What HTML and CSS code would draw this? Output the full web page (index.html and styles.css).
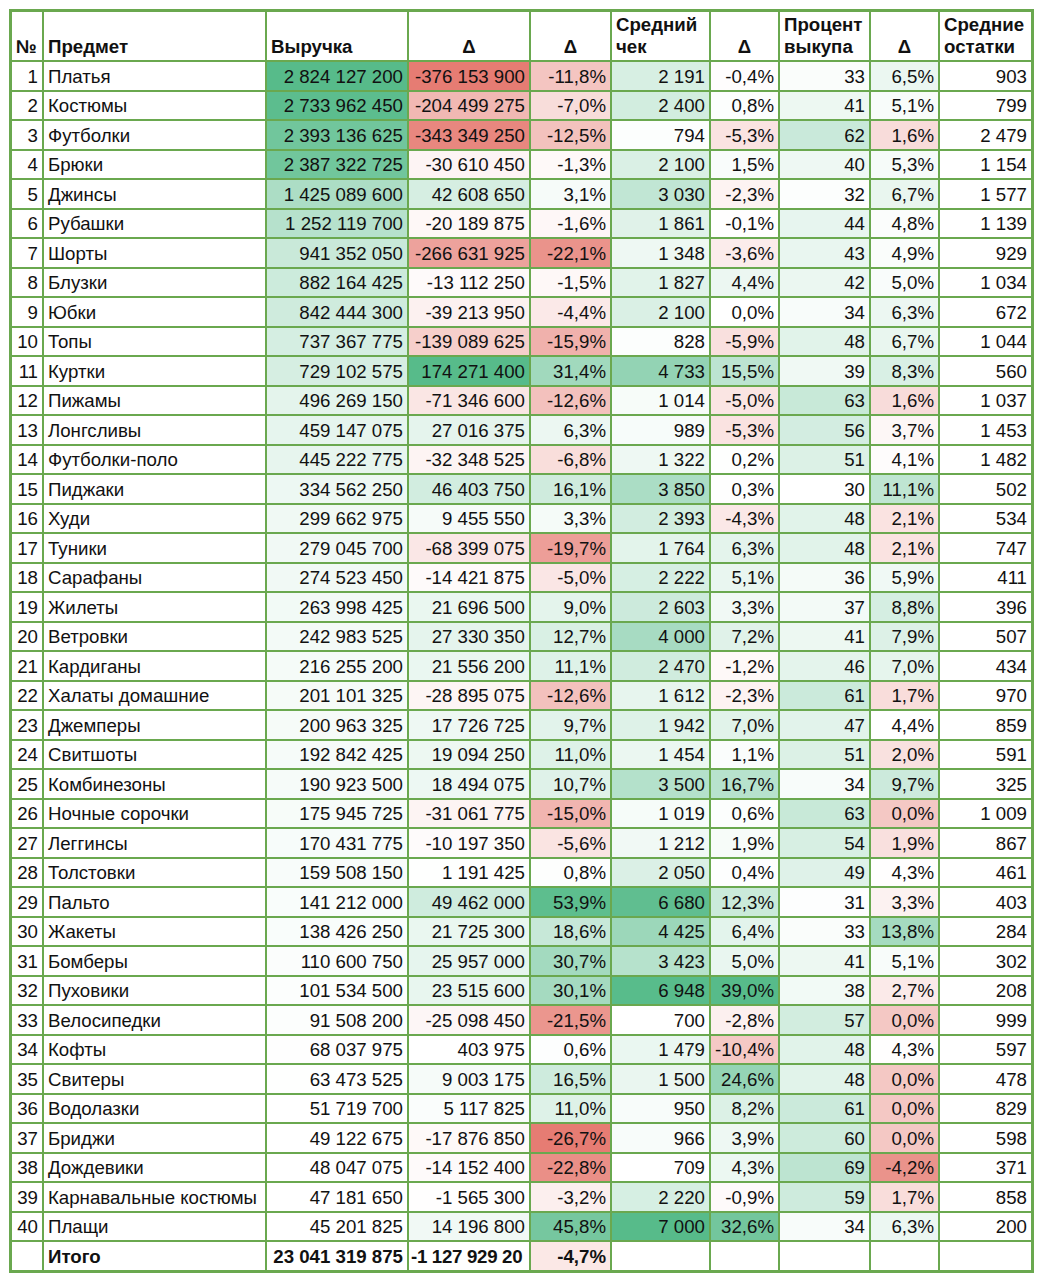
FILE: index.html
```html
<!DOCTYPE html>
<html lang="ru">
<head>
<meta charset="utf-8">
<title>Предметы</title>
<link rel="stylesheet" href="styles.css">
</head>
<body>
<table class="sheet">
<colgroup>
<col class="w-num"><col class="w-name"><col class="w-rev"><col class="w-d1"><col class="w-d2"><col class="w-chk"><col class="w-d3"><col class="w-pct"><col class="w-d4"><col class="w-rest">
</colgroup>
<thead>
<tr>
<th class="l">№</th><th class="l">Предмет</th><th class="l">Выручка</th><th class="c">Δ</th><th class="c">Δ</th><th class="l">Средний<br>чек</th><th class="c">Δ</th><th class="l">Процент<br>выкупа</th><th class="c">Δ</th><th class="l">Средние<br>остатки</th>
</tr>
</thead>
<tbody id="body">
<tr><td>1</td><td>Платья</td><td>2 824 127 200</td><td>-376 153 900</td><td>-11,8%</td><td>2 191</td><td>-0,4%</td><td>33</td><td>6,5%</td><td>903</td></tr>
<tr><td>2</td><td>Костюмы</td><td>2 733 962 450</td><td>-204 499 275</td><td>-7,0%</td><td>2 400</td><td>0,8%</td><td>41</td><td>5,1%</td><td>799</td></tr>
<tr><td>3</td><td>Футболки</td><td>2 393 136 625</td><td>-343 349 250</td><td>-12,5%</td><td>794</td><td>-5,3%</td><td>62</td><td>1,6%</td><td>2 479</td></tr>
<tr><td>4</td><td>Брюки</td><td>2 387 322 725</td><td>-30 610 450</td><td>-1,3%</td><td>2 100</td><td>1,5%</td><td>40</td><td>5,3%</td><td>1 154</td></tr>
<tr><td>5</td><td>Джинсы</td><td>1 425 089 600</td><td>42 608 650</td><td>3,1%</td><td>3 030</td><td>-2,3%</td><td>32</td><td>6,7%</td><td>1 577</td></tr>
<tr><td>6</td><td>Рубашки</td><td>1 252 119 700</td><td>-20 189 875</td><td>-1,6%</td><td>1 861</td><td>-0,1%</td><td>44</td><td>4,8%</td><td>1 139</td></tr>
<tr><td>7</td><td>Шорты</td><td>941 352 050</td><td>-266 631 925</td><td>-22,1%</td><td>1 348</td><td>-3,6%</td><td>43</td><td>4,9%</td><td>929</td></tr>
<tr><td>8</td><td>Блузки</td><td>882 164 425</td><td>-13 112 250</td><td>-1,5%</td><td>1 827</td><td>4,4%</td><td>42</td><td>5,0%</td><td>1 034</td></tr>
<tr><td>9</td><td>Юбки</td><td>842 444 300</td><td>-39 213 950</td><td>-4,4%</td><td>2 100</td><td>0,0%</td><td>34</td><td>6,3%</td><td>672</td></tr>
<tr><td>10</td><td>Топы</td><td>737 367 775</td><td>-139 089 625</td><td>-15,9%</td><td>828</td><td>-5,9%</td><td>48</td><td>6,7%</td><td>1 044</td></tr>
<tr><td>11</td><td>Куртки</td><td>729 102 575</td><td>174 271 400</td><td>31,4%</td><td>4 733</td><td>15,5%</td><td>39</td><td>8,3%</td><td>560</td></tr>
<tr><td>12</td><td>Пижамы</td><td>496 269 150</td><td>-71 346 600</td><td>-12,6%</td><td>1 014</td><td>-5,0%</td><td>63</td><td>1,6%</td><td>1 037</td></tr>
<tr><td>13</td><td>Лонгсливы</td><td>459 147 075</td><td>27 016 375</td><td>6,3%</td><td>989</td><td>-5,3%</td><td>56</td><td>3,7%</td><td>1 453</td></tr>
<tr><td>14</td><td>Футболки-поло</td><td>445 222 775</td><td>-32 348 525</td><td>-6,8%</td><td>1 322</td><td>0,2%</td><td>51</td><td>4,1%</td><td>1 482</td></tr>
<tr><td>15</td><td>Пиджаки</td><td>334 562 250</td><td>46 403 750</td><td>16,1%</td><td>3 850</td><td>0,3%</td><td>30</td><td>11,1%</td><td>502</td></tr>
<tr><td>16</td><td>Худи</td><td>299 662 975</td><td>9 455 550</td><td>3,3%</td><td>2 393</td><td>-4,3%</td><td>48</td><td>2,1%</td><td>534</td></tr>
<tr><td>17</td><td>Туники</td><td>279 045 700</td><td>-68 399 075</td><td>-19,7%</td><td>1 764</td><td>6,3%</td><td>48</td><td>2,1%</td><td>747</td></tr>
<tr><td>18</td><td>Сарафаны</td><td>274 523 450</td><td>-14 421 875</td><td>-5,0%</td><td>2 222</td><td>5,1%</td><td>36</td><td>5,9%</td><td>411</td></tr>
<tr><td>19</td><td>Жилеты</td><td>263 998 425</td><td>21 696 500</td><td>9,0%</td><td>2 603</td><td>3,3%</td><td>37</td><td>8,8%</td><td>396</td></tr>
<tr><td>20</td><td>Ветровки</td><td>242 983 525</td><td>27 330 350</td><td>12,7%</td><td>4 000</td><td>7,2%</td><td>41</td><td>7,9%</td><td>507</td></tr>
<tr><td>21</td><td>Кардиганы</td><td>216 255 200</td><td>21 556 200</td><td>11,1%</td><td>2 470</td><td>-1,2%</td><td>46</td><td>7,0%</td><td>434</td></tr>
<tr><td>22</td><td>Халаты домашние</td><td>201 101 325</td><td>-28 895 075</td><td>-12,6%</td><td>1 612</td><td>-2,3%</td><td>61</td><td>1,7%</td><td>970</td></tr>
<tr><td>23</td><td>Джемперы</td><td>200 963 325</td><td>17 726 725</td><td>9,7%</td><td>1 942</td><td>7,0%</td><td>47</td><td>4,4%</td><td>859</td></tr>
<tr><td>24</td><td>Свитшоты</td><td>192 842 425</td><td>19 094 250</td><td>11,0%</td><td>1 454</td><td>1,1%</td><td>51</td><td>2,0%</td><td>591</td></tr>
<tr><td>25</td><td>Комбинезоны</td><td>190 923 500</td><td>18 494 075</td><td>10,7%</td><td>3 500</td><td>16,7%</td><td>34</td><td>9,7%</td><td>325</td></tr>
<tr><td>26</td><td>Ночные сорочки</td><td>175 945 725</td><td>-31 061 775</td><td>-15,0%</td><td>1 019</td><td>0,6%</td><td>63</td><td>0,0%</td><td>1 009</td></tr>
<tr><td>27</td><td>Леггинсы</td><td>170 431 775</td><td>-10 197 350</td><td>-5,6%</td><td>1 212</td><td>1,9%</td><td>54</td><td>1,9%</td><td>867</td></tr>
<tr><td>28</td><td>Толстовки</td><td>159 508 150</td><td>1 191 425</td><td>0,8%</td><td>2 050</td><td>0,4%</td><td>49</td><td>4,3%</td><td>461</td></tr>
<tr><td>29</td><td>Пальто</td><td>141 212 000</td><td>49 462 000</td><td>53,9%</td><td>6 680</td><td>12,3%</td><td>31</td><td>3,3%</td><td>403</td></tr>
<tr><td>30</td><td>Жакеты</td><td>138 426 250</td><td>21 725 300</td><td>18,6%</td><td>4 425</td><td>6,4%</td><td>33</td><td>13,8%</td><td>284</td></tr>
<tr><td>31</td><td>Бомберы</td><td>110 600 750</td><td>25 957 000</td><td>30,7%</td><td>3 423</td><td>5,0%</td><td>41</td><td>5,1%</td><td>302</td></tr>
<tr><td>32</td><td>Пуховики</td><td>101 534 500</td><td>23 515 600</td><td>30,1%</td><td>6 948</td><td>39,0%</td><td>38</td><td>2,7%</td><td>208</td></tr>
<tr><td>33</td><td>Велосипедки</td><td>91 508 200</td><td>-25 098 450</td><td>-21,5%</td><td>700</td><td>-2,8%</td><td>57</td><td>0,0%</td><td>999</td></tr>
<tr><td>34</td><td>Кофты</td><td>68 037 975</td><td>403 975</td><td>0,6%</td><td>1 479</td><td>-10,4%</td><td>48</td><td>4,3%</td><td>597</td></tr>
<tr><td>35</td><td>Свитеры</td><td>63 473 525</td><td>9 003 175</td><td>16,5%</td><td>1 500</td><td>24,6%</td><td>48</td><td>0,0%</td><td>478</td></tr>
<tr><td>36</td><td>Водолазки</td><td>51 719 700</td><td>5 117 825</td><td>11,0%</td><td>950</td><td>8,2%</td><td>61</td><td>0,0%</td><td>829</td></tr>
<tr><td>37</td><td>Бриджи</td><td>49 122 675</td><td>-17 876 850</td><td>-26,7%</td><td>966</td><td>3,9%</td><td>60</td><td>0,0%</td><td>598</td></tr>
<tr><td>38</td><td>Дождевики</td><td>48 047 075</td><td>-14 152 400</td><td>-22,8%</td><td>709</td><td>4,3%</td><td>69</td><td>-4,2%</td><td>371</td></tr>
<tr><td>39</td><td>Карнавальные костюмы</td><td>47 181 650</td><td>-1 565 300</td><td>-3,2%</td><td>2 220</td><td>-0,9%</td><td>59</td><td>1,7%</td><td>858</td></tr>
<tr><td>40</td><td>Плащи</td><td>45 201 825</td><td>14 196 800</td><td>45,8%</td><td>7 000</td><td>32,6%</td><td>34</td><td>6,3%</td><td>200</td></tr>
</tbody>
<tfoot>
<tr class="total"><td></td><td>Итого</td><td>23 041 319 875</td><td class="clip">-1 127 929 20</td><td id="total-pct">-4,7%</td><td></td><td></td><td></td><td></td><td></td></tr>
</tfoot>
</table>
<script src="script.js"></script>
</body>
</html>
```

FILE: styles.css
```css
* { box-sizing: border-box; }

body {
  margin: 0;
  padding: 9px;
  background: #ffffff;
  font-family: "Liberation Sans", Arial, sans-serif;
  color: #111111;
}

.sheet {
  table-layout: fixed;
  width: 1025px;
  border-collapse: separate;
  border-spacing: 2px;
  border: 1px solid #6aa84f;
  background: #6aa84f;
  font-size: 18.67px;
}

.w-num { width: 30px; }
.w-name { width: 221px; }
.w-rev { width: 140px; }
.w-d1 { width: 120px; }
.w-d2 { width: 79px; }
.w-chk { width: 97px; }
.w-d3 { width: 67px; }
.w-pct { width: 89px; }
.w-d4 { width: 67px; }
.w-rest { width: 91px; }

.sheet th,
.sheet td {
  background: #ffffff;
  padding: 0 4px;
  white-space: nowrap;
  overflow: hidden;
}

.sheet thead tr { height: 48px; }

.sheet th {
  vertical-align: bottom;
  font-weight: 700;
  line-height: 22px;
  padding-bottom: 2px;
}

.sheet th.l { text-align: left; }
.sheet th.c { text-align: center; }

.sheet tbody tr,
.sheet tfoot tr { height: 27.5px; }

.sheet td {
  text-align: right;
  line-height: 22px;
  vertical-align: bottom;
  padding-bottom: 2px;
}

.sheet td:nth-child(2) { text-align: left; }

.total td { font-weight: 700; }
.total td.clip {
  text-align: left;
  padding-left: 2px;
  padding-right: 0;
  letter-spacing: -0.3px;
}
```

FILE: script.js
```js
(function () {
  var RED = [230, 124, 115];
  var GREEN = [87, 187, 138];
  // column index -> [lo (full red), mid (white), hi (full green)]
  var scales = {
    2: [null, 45e6, 2824e6],
    3: [-376e6, 0, 174e6],
    4: [-26.7, 0, 56],
    5: [null, 700, 7000],
    6: [-25, 0, 39],
    7: [null, 30, 130],
    8: [-6, 4.35, 22]
  };
  function mix(c, t) {
    return 'rgb(' + c.map(function (v) {
      return Math.round(255 + (v - 255) * t);
    }).join(',') + ')';
  }
  function color(v, s) {
    if (v >= s[1]) {
      return mix(GREEN, Math.min(1, (v - s[1]) / (s[2] - s[1])));
    }
    if (s[0] === null) return '#ffffff';
    return mix(RED, Math.min(1, (s[1] - v) / (s[1] - s[0])));
  }
  function parse(text) {
    return parseFloat(text.replace(/[\s\u00a0%]/g, '').replace(',', '.'));
  }
  var rows = document.querySelectorAll('#body tr');
  rows.forEach(function (tr) {
    var cells = tr.children;
    Object.keys(scales).forEach(function (k) {
      var cell = cells[k];
      var v = parse(cell.textContent);
      if (!isNaN(v)) cell.style.background = color(v, scales[k]);
    });
  });
  var tp = document.getElementById('total-pct');
  tp.style.background = color(parse(tp.textContent), scales[4]);
})();
```
